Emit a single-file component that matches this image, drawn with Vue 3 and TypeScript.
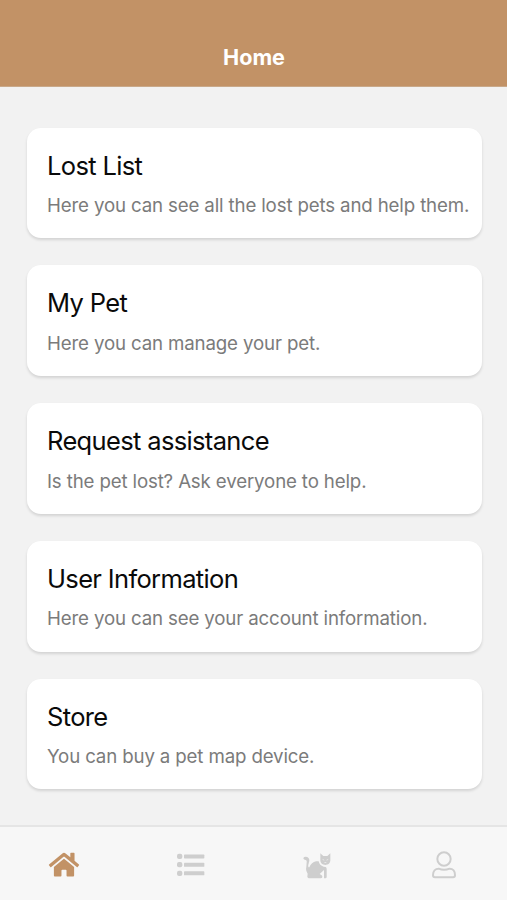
<script setup lang="ts">
interface MenuCard {
  title: string
  text: string
}

const cards: MenuCard[] = [
  { title: 'Lost List', text: 'Here you can see all the lost pets and help them.' },
  { title: 'My Pet', text: 'Here you can manage your pet.' },
  { title: 'Request assistance', text: 'Is the pet lost? Ask everyone to help.' },
  { title: 'User Information', text: 'Here you can see your account information.' },
  { title: 'Store', text: 'You can buy a pet map device.' },
]
</script>

<template>
  <div class="screen">
    <header class="header">
      <h1 class="header-title">Home</h1>
    </header>

    <main class="content">
      <section v-for="card in cards" :key="card.title" class="card">
        <h2 class="card-title">{{ card.title }}</h2>
        <p class="card-text">{{ card.text }}</p>
      </section>
    </main>

    <nav class="tabs">
      <a class="tab active">
        <svg class="icon" viewBox="0 0 150 150">
          <path
            transform="translate(32.5 33.5) scale(0.158)"
            d="M280.37 148.26L96 300.11V464a16 16 0 0 0 16 16l112.06-.29a16 16 0 0 0 15.92-16V368a16 16 0 0 1 16-16h64a16 16 0 0 1 16 16v95.64a16 16 0 0 0 16 16.05L464 480a16 16 0 0 0 16-16V300L295.67 148.26a12.19 12.19 0 0 0-15.3 0zM571.6 251.47L488 182.56V44.05a12 12 0 0 0-12-12h-56a12 12 0 0 0-12 12v72.61L318.47 43a48 48 0 0 0-61 0L4.34 251.47a12 12 0 0 0-1.6 16.9l25.5 31A12 12 0 0 0 45.15 301l235.22-193.74a12.19 12.19 0 0 1 15.3 0L530.9 301a12 12 0 0 0 16.9-1.6l25.5-31a12 12 0 0 0-1.7-16.93z"
          />
        </svg>
      </a>
      <a class="tab">
        <svg class="icon" viewBox="0 0 150 150">
          <rect x="36" y="41" width="16" height="16" rx="6" />
          <rect x="36" y="66" width="16" height="16" rx="6" />
          <rect x="36" y="92" width="16" height="16" rx="6" />
          <rect x="57" y="43.5" width="61" height="12" rx="2" />
          <rect x="57" y="68.5" width="61" height="12" rx="2" />
          <rect x="57" y="94" width="61" height="12" rx="2" />
        </svg>
      </a>
      <a class="tab">
        <svg class="icon" viewBox="0 0 150 150">
          <path
            d="M41 50C48 50 53 55 52 62L49 74C48 79 49 82 52 82C56 73 63 65 72 64H80C81 72 87 78 95 80L101 81Q104 83 104 87V111Q104 115 100 115H96V90L83 102L88 105Q92 108 91 112Q90 115 86 115H52Q47 115 46 110L47 101C43 95 41 88 43 81L44 67C45 62 43 59 38 59Q34 58 34 54Q36 50 41 50Z"
          />
          <path
            fill-rule="evenodd"
            d="M85 40L94 48H106L115 40V61C115 70 108 75 100 75C92 75 85 70 85 61ZM90 56L94 61L98 61ZM110 56L102 61L106 61ZM95 67H105L100 69Z"
          />
        </svg>
      </a>
      <a class="tab">
        <svg class="icon outline" viewBox="0 0 150 150">
          <circle cx="75" cy="57" r="20" />
          <path d="M59 86C70 91 80 91 92 86C102 86 108 94 108 105Q108 112 102 112H48Q42 112 42 105C42 94 49 86 59 86Z" />
        </svg>
      </a>
    </nav>
  </div>
</template>

<style>
body {
  margin: 0;
}
</style>

<style scoped>
.screen {
  display: flex;
  flex-direction: column;
  height: 900px;
  background: #f2f2f2;
  font-family: Inter, 'Liberation Sans', sans-serif;
}

.header {
  box-sizing: border-box;
  display: flex;
  flex: none;
  align-items: flex-end;
  justify-content: center;
  height: 87px;
  padding: 0 0 16px 1px;
  border-bottom: 1px solid #c9a98a;
  background: #c29266;
}

.header-title {
  margin: 0;
  color: #fff;
  font-size: 21.6px;
  font-weight: 650;
  line-height: 26px;
}

.content {
  display: flex;
  flex: 1;
  flex-direction: column;
  gap: 27px;
  padding: 40.5px 25px 0 27px;
}

.card {
  box-sizing: border-box;
  height: 110.8px;
  padding: 20px 0 0 20px;
  border-radius: 14px;
  background: #fff;
  box-shadow: 0 2px 3px rgba(0, 0, 0, 0.13);
  white-space: nowrap;
}

.card-title {
  margin: 0;
  color: #0a0a0a;
  font-size: 25.5px;
  font-weight: 400;
  letter-spacing: -0.65px;
  line-height: 35px;
}

.card-text {
  margin: 10.5px 0 0;
  color: #7b7b7b;
  font-size: 18.7px;
  letter-spacing: -0.15px;
  line-height: 26px;
}

.tabs {
  box-sizing: border-box;
  display: grid;
  flex: none;
  grid-template-columns: repeat(4, 1fr);
  height: 75px;
  padding-top: 13px;
  border-top: 2px solid #e5e5e5;
  background: #f7f7f7;
}

.tab {
  display: flex;
  align-items: flex-start;
  justify-content: center;
  color: #cecece;
}

.tab.active {
  color: #c29266;
}

.icon {
  width: 50px;
  height: 50px;
  fill: currentColor;
}

.outline {
  fill: none;
  stroke: currentColor;
  stroke-width: 6;
}
</style>
